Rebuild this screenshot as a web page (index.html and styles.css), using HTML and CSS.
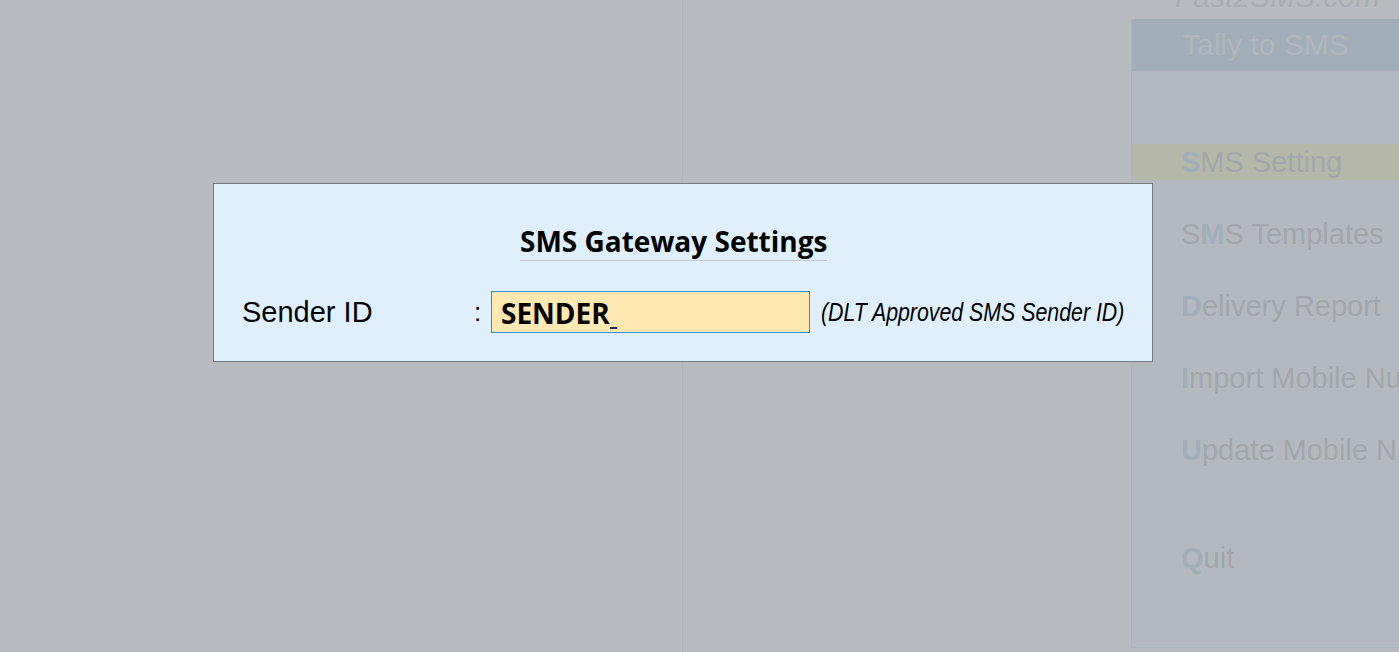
FILE: index.html
```html
<!DOCTYPE html>
<html>
<head>
<meta charset="utf-8">
<link rel="stylesheet" href="styles.css">
</head>
<body>
<div class="screen">
  <div class="workarea">
    <div class="col col-left"></div>
    <div class="col col-right"></div>
  </div>
  <aside class="sidebar">
    <div class="brand"><span>Fast2SMS.com</span></div>
    <div class="panel">
      <div class="panel-title">Tally to SMS</div>
      <ul class="menu">
        <li class="item active"><b>S</b>MS Setting</li>
        <li class="item">S<b>M</b>S Templates</li>
        <li class="item"><b>D</b>elivery Report</li>
        <li class="item"><b>I</b>mport Mobile Numbers</li>
        <li class="item"><b>U</b>pdate Mobile Numbers</li>
        <li class="item quit"><b>Q</b>uit</li>
      </ul>
    </div>
  </aside>

  <div class="dialog">
    <div class="dialog-title"><span>SMS Gateway Settings</span></div>
    <div class="field-row">
      <span class="label">Sender ID</span>
      <span class="colon">:</span>
      <span class="input"><span class="value">SENDER</span><span class="caret"></span></span>
      <span class="hint">(DLT Approved SMS Sender ID)</span>
    </div>
  </div>
</div>
</body>
</html>
```

FILE: styles.css
```css
* { box-sizing: border-box; }
html, body {
  margin: 0;
  padding: 0;
  width: 1399px;
  height: 652px;
  overflow: hidden;
  background: #b8bcc0;
  font-family: "Liberation Sans", Arial, sans-serif;
}
.screen {
  position: relative;
  display: grid;
  grid-template-columns: 1131px 268px;
  height: 652px;
  overflow: hidden;
}
.workarea {
  display: grid;
  grid-template-columns: 683px 1fr;
  height: 652px;
}
.col-left {
  border-right: 1px solid #b2b6ba;
}
.sidebar {
  display: flex;
  flex-direction: column;
  height: 652px;
  overflow: hidden;
}
.brand {
  height: 19px;
  overflow: hidden;
  padding-left: 44px;
}
.brand span {
  display: block;
  margin-top: -20px;
  font-size: 30px;
  font-style: italic;
  color: #a9adb1;
  line-height: 34px;
  white-space: nowrap;
}
.panel {
  height: 629px;
  background: #b4b9bf;
  border-left: 1px solid #adb5bc;
  border-bottom: 1px solid #adb5bc;
  overflow: hidden;
}
.panel-title {
  height: 52px;
  background: #a1adb8;
  color: #afb6bd;
  font-size: 30px;
  line-height: 52px;
  padding-left: 50px;
}
.menu {
  list-style: none;
  margin: 0;
  padding: 0;
  padding-top: 73px;
}
.item {
  height: 36px;
  line-height: 36px;
  font-size: 29px;
  color: #a2a6aa;
  padding-left: 49px;
  white-space: nowrap;
  margin-bottom: 36px;
}
.item b {
  color: #a0adba;
  font-weight: bold;
}
.item.active {
  background: #b5b7a8;
}
.item.quit {
  margin-top: 72px;
}

.dialog {
  position: absolute;
  left: 213px;
  top: 183px;
  width: 940px;
  height: 179px;
  background: #dff0fc;
  border: 1px solid #767a7e;
  padding: 38px 0 0 28px;
}
.dialog-title {
  padding-left: 278px;
  height: 40px;
}
.dialog-title span {
  display: inline-block;
  font-family: "Open Sans", "Liberation Sans", sans-serif;
  font-weight: bold;
  font-size: 28px;
  line-height: 38px;
  color: #000;
  border-bottom: 1px solid #c4c8cc;
}
.field-row {
  display: flex;
  align-items: center;
  margin-top: 29px;
  height: 42px;
}
.field-row > * { flex-shrink: 0; }
.label {
  width: 232px;
  font-size: 29px;
  color: #000;
}
.colon {
  width: 17px;
  font-size: 26px;
  color: #000;
}
.input {
  width: 319px;
  height: 42px;
  background: #ffe8b2;
  border: 1px solid #2e8fd3;
  padding-left: 9px;
  display: flex;
  align-items: flex-end;
}
.value {
  font-family: "Open Sans", "Liberation Sans", sans-serif;
  font-weight: bold;
  font-size: 28px;
  line-height: 38px;
  color: #000;
}
.caret {
  display: inline-block;
  width: 7px;
  height: 2px;
  background: #1b2a66;
  margin-bottom: 3px;
}
.hint {
  display: inline-block;
  margin-left: 11px;
  font-family: "Liberation Sans", Arial, sans-serif;
  font-style: italic;
  font-size: 26px;
  color: #000;
  white-space: nowrap;
  transform: scaleX(0.82);
  transform-origin: left center;
}
```
